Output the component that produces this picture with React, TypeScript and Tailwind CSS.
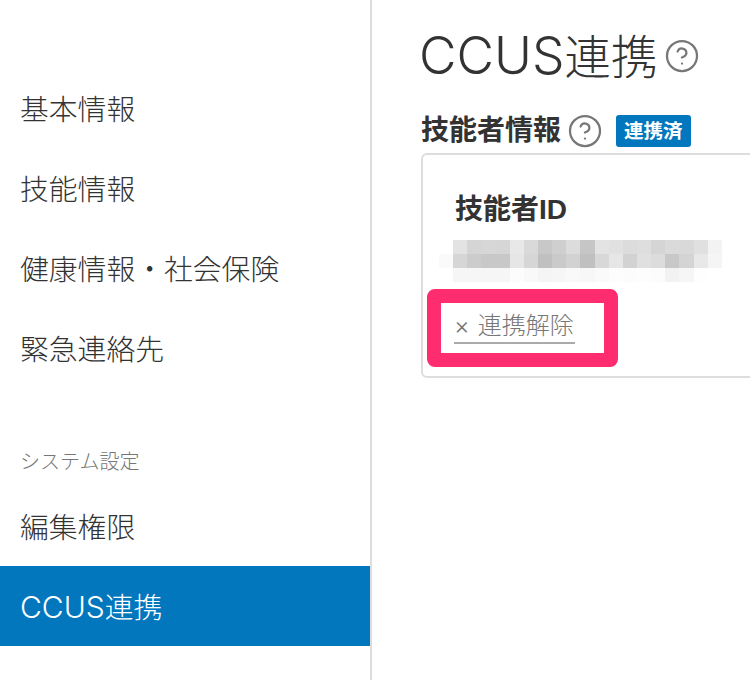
import { CircleHelp } from 'lucide-react'
import clsx from 'clsx'

const navTop = ['基本情報', '技能情報', '健康情報・社会保険', '緊急連絡先']

// blurred-out id, cell colours as sampled from the mosaic
const mosaic = [
  ['#ffffff', '#e3e3e3', '#d5d5d5', '#d7d7d7', '#d6d6d6', '#e8e8e8', '#d9d9d9', '#c8c8c8', '#cfcfcf', '#dcdcdc', '#c6c6c6', '#e3e3e3', '#e1e1e1', '#dcdcdc', '#dedede', '#d5d5d5', '#dadada', '#d9d9d9', '#e0e0e0', '#f3f3f3'],
  ['#fafafa', '#d6d6d6', '#cccccc', '#c8c8c8', '#c8c8c8', '#e6e6e6', '#d6d6d6', '#c0c0c0', '#cacaca', '#d2d2d2', '#c0c0c0', '#d8d8d8', '#e6e6e6', '#d2d2d2', '#e0e0e0', '#dcdcdc', '#c8c8c8', '#d4d4d4', '#e8e8e8', '#f5f5f5'],
  ['#ffffff', '#f6f6f6', '#f6f6f6', '#f6f6f6', '#f6f6f6', '#fcfcfc', '#f9f9f9', '#f5f5f5', '#f6f6f6', '#f9f9f9', '#f7f7f7', '#fafafa', '#fdfdfd', '#fcfcfc', '#fdfdfd', '#fcfcfc', '#f2f2f2', '#f6f6f6', '#fefefe', '#ffffff']
]

function NavItem({ children, active }: { children: React.ReactNode; active?: boolean }) {
  return (
    <div
      className={clsx(
        "flex h-20 items-center pl-5 pt-[3px] font-['Inter','Noto_Sans_CJK_JP',sans-serif] text-[28.8px] font-light",
        active ? 'bg-[#0277bd] text-white' : 'text-[#333333]'
      )}
    >
      {children}
    </div>
  )
}

export default function App() {
  return (
    <div className="flex h-[680px] w-[750px] overflow-hidden bg-white font-['Liberation_Sans','Noto_Sans_CJK_JP',sans-serif] text-[#333333]">
      <aside className="w-[372px] shrink-0 border-r-2 border-[#dddddd] pt-[68px]">
        {navTop.map((label) => (
          <NavItem key={label}>{label}</NavItem>
        ))}
        <div className="flex h-[98px] items-end pb-[9px] pl-5 text-[20px] font-light text-[#777777]">
          システム設定
        </div>
        <NavItem>編集権限</NavItem>
        <NavItem active>
          <span className="text-[30px]">CCUS</span>連携
        </NavItem>
      </aside>

      <main className="min-w-0 flex-1 pl-[49px]">
        <div className="flex h-[112px] items-center">
          <h1 className="ml-[-2px] font-['Inter','Noto_Sans_CJK_JP',sans-serif] text-[46.5px] font-light leading-none">
            <span className="text-[51.5px]">CCUS</span>連携
          </h1>
          <CircleHelp className="ml-[7px] text-[#777777]" size={36} strokeWidth={1.5} />
        </div>

        <div className="flex h-[36px] items-center pt-[1px]">
          <h2 className="text-[28px] font-bold leading-none">技能者情報</h2>
          <CircleHelp className="ml-[6px] text-[#777777]" size={36} strokeWidth={1.5} />
          <span className="ml-[13px] rounded-[3px] bg-[#0277bd] px-2 py-[3px] text-[19.5px] font-bold leading-[26px] text-white">
            連携済
          </span>
        </div>

        <section className="relative mt-[5px] h-[225px] w-[400px] rounded-md border-2 border-[#dddddd] pl-[32px] pt-[33px]">
          <h3 className="text-[28px] font-bold leading-[44px]">技能者ID</h3>
          <div className="ml-[-16px] mt-[8px]">
            {mosaic.map((row, i) => (
              <div key={i} className="flex">
                {row.map((color, j) => (
                  <div key={j} className="h-[14px] w-[14.15px]" style={{ backgroundColor: color }} />
                ))}
              </div>
            ))}
          </div>
          <button className="ml-[-1px] mt-[28px] flex items-center border-b-2 border-[#aaaaaa] pr-[1px] text-[24px] font-light leading-[32px] text-[#777777]">
            <span className="mr-[8px] font-['Inter'] text-[24px] font-light">×</span>
            連携解除
          </button>
          <div className="absolute left-[4px] top-[134px] h-[78px] w-[191px] rounded-lg border-[14px] border-[#ff2d6f]" />
        </section>
      </main>
    </div>
  )
}
